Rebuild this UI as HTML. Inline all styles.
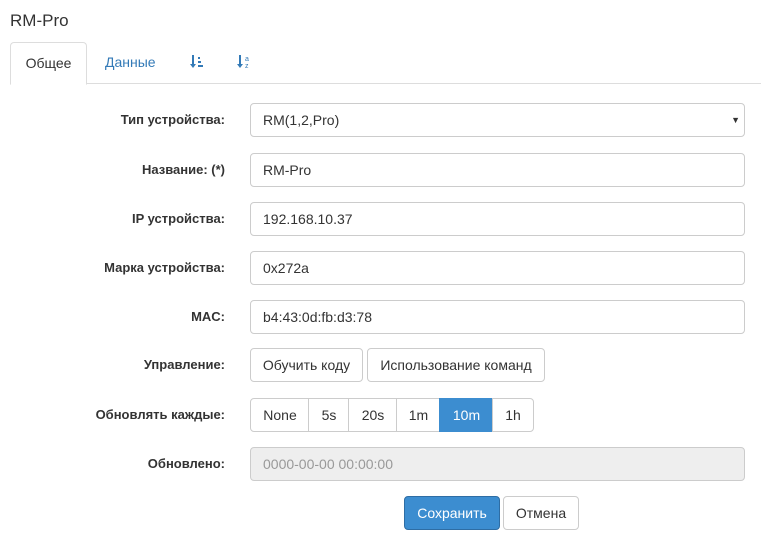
<!DOCTYPE html><html><head><style>
body{margin:0;background:#fff;font-family:"Liberation Sans",Arial,sans-serif;font-size:14px;color:#333;width:761px;height:543px;overflow:hidden;position:relative}
.a{position:absolute}
.t{left:10px;top:11px;font-size:17px}
.tabs{left:10px;top:42px;width:751px;height:41px;border-bottom:1px solid #ddd}
.tab{position:absolute;top:0;height:41px;line-height:41px;font-size:14px}
.act{left:0;width:75px;border:1px solid #ddd;border-bottom:1px solid #fff;border-radius:4px 4px 0 0;text-align:center;background:#fff}
.lbl{right:536px;font-weight:bold;font-size:13px;text-align:right;height:34px;line-height:34px}
.in{left:250px;width:481px;height:32px;border:1px solid #ccc;border-radius:4px;padding-left:12px;line-height:32px;font-size:14px}
.btn{height:32px;line-height:32px;border:1px solid #ccc;text-align:center;background:#fff;font-size:14px}
</style></head><body>
<div class="a t">RM-Pro</div>
<div class="a tabs">
<div class="tab act">Общее</div>
<div class="tab" style="left:95px;color:#337ab7">Данные</div>
<svg style="position:absolute;left:180px;top:12px" width="16" height="16" viewBox="0 0 16 16" fill="#337ab7"><rect x="2" y="1" width="2" height="11"/><path d="M0 10h6l-3 4z"/><rect x="8" y="3" width="2" height="2"/><rect x="8" y="7" width="3" height="2"/><rect x="8" y="11" width="5" height="2"/></svg>
<svg style="position:absolute;left:227px;top:12px" width="16" height="16" viewBox="0 0 16 16" fill="#337ab7"><rect x="2" y="1" width="2" height="11"/><path d="M0 10h6l-3 4z"/><text x="8" y="7" font-size="7" font-family="Liberation Sans">a</text><text x="8" y="14" font-size="7" font-family="Liberation Sans">z</text></svg>
</div>
<div class="a lbl" style="top:103px">Тип устройства:</div>
<div class="a in" style="top:103px">RM(1,2,Pro)<span style="position:absolute;right:4px;font-size:9px">▼</span></div>
<div class="a lbl" style="top:153px">Название: (*)</div>
<div class="a in" style="top:153px">RM-Pro</div>
<div class="a lbl" style="top:202px">IP устройства:</div>
<div class="a in" style="top:202px">192.168.10.37</div>
<div class="a lbl" style="top:251px">Марка устройства:</div>
<div class="a in" style="top:251px">0x272a</div>
<div class="a lbl" style="top:300px">MAC:</div>
<div class="a in" style="top:300px">b4:43:0d:fb:d3:78</div>
<div class="a lbl" style="top:348px">Управление:</div>
<div class="a btn" style="top:348px;left:250px;width:111px;border-radius:4px">Обучить коду</div>
<div class="a btn" style="top:348px;left:367px;width:176px;border-radius:4px">Использование команд</div>
<div class="a lbl" style="top:398px">Обновлять каждые:</div>
<div class="a btn" style="top:398px;left:250px;width:58px;border-radius:4px 0 0 4px">None</div>
<div class="a btn" style="top:398px;left:308px;width:40px;border-left:1px solid #ccc">5s</div>
<div class="a btn" style="top:398px;left:348px;width:48px">20s</div>
<div class="a btn" style="top:398px;left:396px;width:43px">1m</div>
<div class="a btn" style="top:398px;left:439px;width:53px;background:#3c8dd0;border-color:#3c8dd0;color:#fff">10m</div>
<div class="a btn" style="top:398px;left:492px;width:40px;border-radius:0 4px 4px 0">1h</div>
<div class="a lbl" style="top:447px">Обновлено:</div>
<div class="a in" style="top:447px;background:#eee;color:#999">0000-00-00 00:00:00</div>
<div class="a btn" style="top:496px;left:404px;width:94px;border-radius:4px;background:#3c8dd0;border-color:#2e6da4;color:#fff">Сохранить</div>
<div class="a btn" style="top:496px;left:503px;width:74px;border-radius:4px">Отмена</div>
</body></html>
